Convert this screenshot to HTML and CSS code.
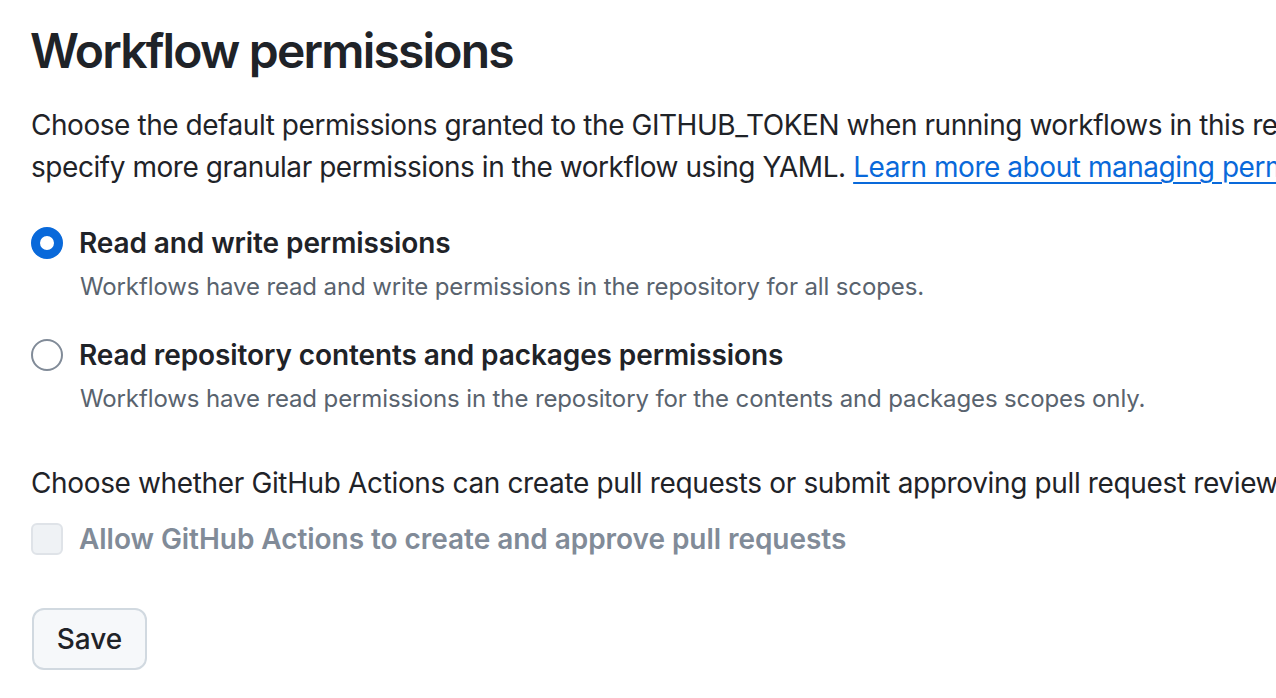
FILE: index.html
```html
<!DOCTYPE html>
<html lang="en">
<head>
<meta charset="utf-8">
<title>Workflow permissions</title>
<link rel="stylesheet" href="styles.css">
</head>
<body>
<main class="page">
  <h2 class="title">Workflow permissions</h2>
  <p class="intro">Choose the default permissions granted to the GITHUB_TOKEN when running workflows in this repository. You can<br>specify more granular permissions in the workflow using YAML. <a class="link" href="#">Learn more about managing permissions.</a></p>

  <div class="option option-first">
    <span class="radio radio-checked"></span>
    <div class="option-body">
      <div class="option-label">Read and write permissions</div>
      <div class="option-desc">Workflows have read and write permissions in the repository for all scopes.</div>
    </div>
  </div>

  <div class="option option-second">
    <span class="radio"></span>
    <div class="option-body">
      <div class="option-label">Read repository contents and packages permissions</div>
      <div class="option-desc">Workflows have read permissions in the repository for the contents and packages scopes only.</div>
    </div>
  </div>

  <p class="question">Choose whether GitHub Actions can create pull requests or submit approving pull request reviews.</p>

  <div class="check-row">
    <span class="checkbox"></span>
    <span class="check-label">Allow GitHub Actions to create and approve pull requests</span>
  </div>

  <button class="save" type="button">Save</button>
</main>
</body>
</html>
```

FILE: styles.css
```css
html, body {
  margin: 0;
  padding: 0;
  background: #ffffff;
}

body {
  font-family: Inter, "Noto Sans", "Liberation Sans", sans-serif;
  color: #1f2328;
  overflow: hidden;
}

.page {
  padding-left: 32px;
  width: 1600px;
}

.title {
  margin: 21px 0 0;
  font-size: 48px;
  line-height: 60px;
  font-weight: 600;
  letter-spacing: -1.8px;
  margin-left: -2px;
}

.intro {
  margin: 23px 0 0;
  font-size: 28px;
  line-height: 42px;
  letter-spacing: -0.45px;
  white-space: nowrap;
  margin-left: -1px;
}

.link {
  color: #0969da;
  text-decoration: underline;
  text-underline-offset: 5px;
  text-decoration-thickness: 2px;
}

.option {
  display: flex;
  align-items: flex-start;
  gap: 17px;
  margin-left: -1px;
}

.option-first {
  margin-top: 34px;
}

.option-second {
  margin-top: 29px;
}

.radio {
  flex: none;
  box-sizing: border-box;
  width: 32px;
  height: 32px;
  margin-top: 5px;
  border-radius: 50%;
  border: 2px solid #818b98;
  background: #ffffff;
}

.radio-checked {
  border: 9px solid #0969da;
}

.option-label {
  font-size: 28px;
  line-height: 42px;
  font-weight: 600;
  letter-spacing: -0.1px;
  margin-left: -1px;
}

.option-desc {
  margin-top: 5px;
  font-size: 24px;
  line-height: 36px;
  letter-spacing: -0.12px;
  color: #59636e;
}

.question {
  margin: 45px 0 0;
  font-size: 28px;
  line-height: 42px;
  letter-spacing: -0.36px;
  white-space: nowrap;
  margin-left: -1px;
}

.check-row {
  display: flex;
  align-items: center;
  gap: 17px;
  margin-top: 14px;
  margin-left: -1px;
}

.checkbox {
  flex: none;
  box-sizing: border-box;
  width: 32px;
  height: 32px;
  border-radius: 6px;
  border: 2px solid #dfe3e8;
  background: #eff2f5;
}

.check-label {
  font-size: 28px;
  line-height: 42px;
  font-weight: 600;
  letter-spacing: -0.05px;
  color: #818b98;
  margin-left: -1px;
}

.save {
  display: block;
  margin-top: 48px;
  box-sizing: border-box;
  width: 115px;
  height: 62px;
  padding: 0;
  font-family: inherit;
  font-size: 28px;
  font-weight: 500;
  color: #1f2328;
  background: #f6f8fa;
  border: 2px solid #d1d9e0;
  border-radius: 12px;
}
```
